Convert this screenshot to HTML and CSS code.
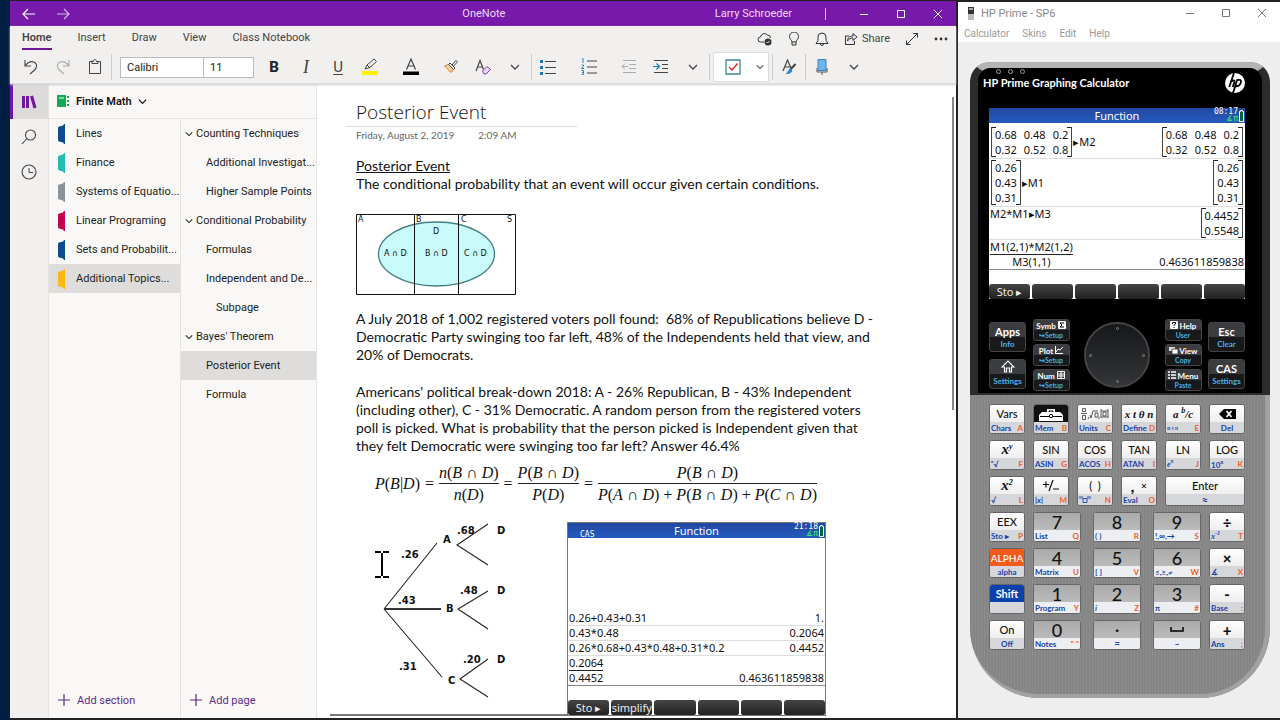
FILE: index.html
```html
<!DOCTYPE html>
<html lang="en">
<head>
<meta charset="utf-8">
<title>OneNote and HP Prime</title>
<link rel="stylesheet" href="styles.css">
</head>
<body>
<svg class="defs" aria-hidden="true">
  <symbol id="chev" viewBox="0 0 10 10"><path d="M1 3l4 4 4-4" fill="none" stroke="currentColor" stroke-width="1.3"/></symbol>
  <symbol id="tab" viewBox="0 0 8 20"><path d="M0 3.500L1 2.500 5 1.500 6 0h1v20H6l-1-1.500-4-1-1-1z" fill="currentColor"/></symbol>
  <symbol id="min" viewBox="0 0 10 10"><path d="M1 5.500h8" stroke="currentColor"/></symbol>
  <symbol id="max" viewBox="0 0 10 10"><path d="M1.500 1.500h7v7h-7z" fill="none" stroke="currentColor"/></symbol>
  <symbol id="close" viewBox="0 0 10 10"><path d="M1 1l8 8M9 1l-8 8" stroke="currentColor"/></symbol>
  <symbol id="plus" viewBox="0 0 14 14"><path d="M7 1v12M1 7h12" stroke="currentColor" stroke-width="1.200"/></symbol>
  <symbol id="batt" viewBox="0 0 5 12"><path d="M.5 1.500h1v-1h2v1h1v10h-4z" fill="#063" stroke="#fff"/></symbol>
</svg>
<div class="desktop">
  <section class="onenote">
    <header class="titlebar">
      <button aria-label="Back"><svg width="14" height="12" viewBox="0 0 14 12"><path d="M13 6H1M6 1L1 6l5 5" fill="none" stroke="currentColor" stroke-width="1.200"/></svg></button>
      <button class="forward" aria-label="Forward"><svg width="14" height="12" viewBox="0 0 14 12"><path d="M1 6h12M8 1l5 5-5 5" fill="none" stroke="currentColor" stroke-width="1.200"/></svg></button>
      <span class="app-name">OneNote</span>
      <span class="user">Larry Schroeder</span>
      <span class="tsep"></span>
      <button aria-label="Minimize"><svg width="10" height="10"><use href="#min"/></svg></button>
      <button aria-label="Maximize"><svg width="10" height="10"><use href="#max"/></svg></button>
      <button aria-label="Close"><svg width="10" height="10"><use href="#close"/></svg></button>
    </header>
    <div class="ribbon">
      <nav class="tabs">
        <a class="on" href="#home">Home</a><a href="#insert">Insert</a><a href="#draw">Draw</a><a href="#view">View</a><a href="#class">Class Notebook</a>
        <div class="tools-right">
          <button aria-label="Sync"><svg width="16" height="14" viewBox="0 0 16 14"><path d="M7 10H3.500a2.500 2.500 0 010-5 4 4 0 017-2 3 3 0 013 3" fill="none" stroke="#333"/><circle cx="11" cy="10" r="3.500" fill="#333"/><path d="M9.500 10l1 1 2-2" fill="none" stroke="#fff"/></svg></button>
          <button aria-label="Ideas"><svg width="12" height="14" viewBox="0 0 12 14"><path d="M4 10c0-2-2.500-2.500-2.500-5.500a4.500 4.500 0 019 0c0 3-2.500 3.500-2.500 5.500zv3h4v-3" fill="none" stroke="#333"/></svg></button>
          <button aria-label="Notifications"><svg width="14" height="14" viewBox="0 0 14 14"><path d="M1 11.500h12l-2-3V5a4 4 0 00-8 0v3.500zM5.500 12a1.500 1.500 0 003 0" fill="none" stroke="#333"/></svg></button>
          <button class="share"><svg width="14" height="14" viewBox="0 0 14 14"><path d="M5 4H1.500v8.500h9V9M3.500 9c0-4 3-5 5.500-5V1.500L13 5 9 8.500V6C7 6 5 6.500 3.500 9z" fill="none" stroke="#333"/></svg>Share</button>
          <button aria-label="Full screen"><svg width="14" height="14" viewBox="0 0 14 14"><path d="M1.500 12.500l11-11M8.500 1.500h4v4M1.500 8.500v4h4" fill="none" stroke="#333"/></svg></button>
          <button aria-label="More"><svg width="14" height="4" viewBox="0 0 14 4"><g fill="#333"><circle cx="2" cy="2" r="1.400"/><circle cx="7" cy="2" r="1.400"/><circle cx="12" cy="2" r="1.400"/></g></svg></button>
        </div>
      </nav>
      <div class="toolbar">
        <button aria-label="Undo"><svg width="16" height="16" viewBox="0 0 16 16"><path d="M2 1v6h6M2 7c3-4 6-5 9-4 4 2 3 6 0 8.500L7 15" fill="none" stroke="#444" stroke-width="1.100"/></svg></button>
        <button aria-label="Redo"><svg width="16" height="16" viewBox="0 0 16 16"><path d="M14 1v6H8M14 7c-3-4-6-5-9-4-4 2-3 6 0 8.500L9 15" fill="none" stroke="#aaa" stroke-width="1.100"/></svg></button>
        <button aria-label="Paste"><svg width="14" height="16" viewBox="0 0 14 16"><path d="M4 2.500H1.500v12h11v-12H10M4 1.500v3h6v-2H8.500c0-2.500-3-2.500-3 0H4" fill="none" stroke="#444"/></svg></button>
        <span class="sep"></span>
        <div class="combo"><input class="face" aria-label="Font" value="Calibri"><input class="size" aria-label="Font size" value="11"></div>
        <button class="b">B</button>
        <button class="i">I</button>
        <button class="u">U</button>
        <button aria-label="Highlight"><svg width="18" height="18" viewBox="0 0 18 18"><path d="M1 13h16v4H1z" fill="#fff200"/><path d="M4 11l2-4 7-6 2.500 2.500-6.500 6L4 11zM6 7l3 3" fill="none" stroke="#444"/></svg></button>
        <button class="wide" aria-label="Font color"><svg width="18" height="18" viewBox="0 0 18 18"><path d="M1 13.500h16V17H1z" fill="#000"/><path d="M4.500 11.500L9 1l4.500 10.500M6 8h6" fill="none" stroke="#444" stroke-width="1.200"/></svg></button>
        <button aria-label="Format painter"><svg width="16" height="16" viewBox="0 0 16 16"><path d="M1.500 7L8 13.500l2.500-3-5-5z" fill="#fbd3a0" stroke="#e07a20"/><path d="M5.500 5.500L7 4l5 5-1.500 1.500zM9 6l4-4.500 1.500 1.500L10.500 7" fill="#f2f0ef" stroke="#444"/></svg></button>
        <button aria-label="Clear formatting"><svg width="18" height="16" viewBox="0 0 18 16"><path d="M2 12L6 1.500l3.500 9M3.500 8H8" fill="none" stroke="#444" stroke-width="1.200"/><path d="M8.500 12l4.500-4.500 3.500 3L12 15H10z" fill="#ecd9f2" stroke="#8e35a8"/></svg></button>
        <button aria-label="More font options"><svg width="10" height="10"><use href="#chev"/></svg></button>
        <span class="sep"></span>
        <button aria-label="Bullets"><svg width="16" height="16" viewBox="0 0 16 16"><path d="M5 2.500h11M5 8.500h11M5 14.500h11" stroke="#444"/><path d="M0 1h3v3H0zM0 7h3v3H0zM0 13h3v3H0z" fill="#1878c0"/></svg></button>
        <button class="wide" aria-label="Numbering"><svg width="16" height="18" viewBox="0 0 16 18"><path d="M6 3h10M6 9h10M6 15h10" stroke="#444"/><path d="M1 1.500l1-1V5M.5 7h2v1.500l-2 2h2.500M.5 12.500h2v4h-2M1 14.500h1.500" fill="none" stroke="#1878c0" stroke-width=".9"/></svg></button>
        <button aria-label="Outdent"><svg width="16" height="14" viewBox="0 0 16 14"><path d="M2 .5h13M8 4.500h7M8 8.500h7M2 12.500h13M7 6.500H1M4 3.500l-3 3 3 3" fill="none" stroke="#aaa"/></svg></button>
        <button aria-label="Indent"><svg width="16" height="14" viewBox="0 0 16 14"><path d="M1 .5h14M9 4.500h6M9 8.500h6M1 12.500h14" stroke="#444"/><path d="M0 6.500h6M3.500 3.500l3 3-3 3" fill="none" stroke="#1878c0" stroke-width="1.200"/></svg></button>
        <button aria-label="More paragraph options"><svg width="10" height="10"><use href="#chev"/></svg></button>
        <span class="sep"></span>
        <div class="tagbox">
          <button aria-label="To do tag"><svg width="16" height="16" viewBox="0 0 16 16"><path d="M1 1h14v14H1z" fill="#fff" stroke="#3d8795" stroke-width="1.300"/><path d="M4 8l3 3 5.500-6.500" fill="none" stroke="#d22" stroke-width="1.300"/></svg></button>
          <button class="slim" aria-label="More tags"><svg width="8" height="10"><use href="#chev"/></svg></button>
        </div>
        <span class="sep"></span>
        <button aria-label="Styles"><svg width="16" height="16" viewBox="0 0 16 16"><path d="M2 12L6.500 1l4 9M3.500 8H9" fill="none" stroke="#444" stroke-width="1.200"/><path d="M14.500 5L9 11" stroke="#444" stroke-width="2"/><path d="M9.500 9.500l2 2c-1 3-4 3.500-7 3.500 2-1 2-4 5-5.500z" fill="#2a8ad4"/></svg></button>
        <span class="sep"></span>
        <button aria-label="Dictate"><svg width="14" height="18" viewBox="0 0 14 18"><path d="M2 10v4h10v-4M7 14v3" fill="none" stroke="#555"/><path d="M3 1.500h8v11H3z" fill="#6db5ea" stroke="#3b83bb"/></svg></button>
        <button aria-label="More"><svg width="10" height="10"><use href="#chev"/></svg></button>
      </div>
    </div>
    <div class="workspace">
      <nav class="rail">
        <button class="on" aria-label="Notebooks"><svg width="16" height="14" viewBox="0 0 16 14"><path d="M1 1h3v12H1zM5 1h3v12H5zM9 1.500l3-1 3.500 12-3 1z" fill="#6f18a0"/></svg></button>
        <button aria-label="Search"><svg width="16" height="16" viewBox="0 0 16 16"><circle cx="9.500" cy="6" r="5" fill="none" stroke="#444" stroke-width="1.100"/><path d="M6 9.500L1 15" stroke="#444" stroke-width="1.100"/></svg></button>
        <button aria-label="Recent"><svg width="16" height="16" viewBox="0 0 16 16"><circle cx="8" cy="8" r="7" fill="none" stroke="#444" stroke-width="1.100"/><path d="M8 4v4.500h4" fill="none" stroke="#444"/></svg></button>
      </nav>
      <aside class="nav">
        <button class="notebook"><svg width="14" height="14" viewBox="0 0 14 14"><path d="M1 1h9v12H1zM11 2h2v2h-2zM11 6h2v2h-2zM11 10h2v2h-2z" fill="#12ab51"/><path d="M3 4h5" stroke="#fff"/></svg><b>Finite Math</b><svg width="9" height="9"><use href="#chev"/></svg></button>
        <div class="columns">
          <div class="col sections">
            <a href="#s1"><svg class="navy"><use href="#tab"/></svg><span>Lines</span></a>
            <a href="#s2"><svg class="teal"><use href="#tab"/></svg><span>Finance</span></a>
            <a href="#s3"><svg class="gray"><use href="#tab"/></svg><span>Systems of Equatio...</span></a>
            <a href="#s4"><svg class="red"><use href="#tab"/></svg><span>Linear Programing</span></a>
            <a href="#s5"><svg class="navy"><use href="#tab"/></svg><span>Sets and Probabilit...</span></a>
            <a href="#s6" class="on"><svg class="gold"><use href="#tab"/></svg><span>Additional Topics...</span></a>
            <button class="add"><svg width="14" height="14"><use href="#plus"/></svg>Add section</button>
          </div>
          <div class="col pages">
            <a href="#p1"><svg width="8" height="8"><use href="#chev"/></svg>Counting Techniques</a>
            <a href="#p2" class="l1">Additional Investigat...</a>
            <a href="#p3" class="l1">Higher Sample Points</a>
            <a href="#p4"><svg width="8" height="8"><use href="#chev"/></svg>Conditional Probability</a>
            <a href="#p5" class="l1">Formulas</a>
            <a href="#p6" class="l1">Independent and De...</a>
            <a href="#p7" class="l2">Subpage</a>
            <a href="#p8"><svg width="8" height="8"><use href="#chev"/></svg>Bayes' Theorem</a>
            <a href="#p9" class="l1 on">Posterior Event</a>
            <a href="#p10" class="l1">Formula</a>
            <button class="add"><svg width="14" height="14"><use href="#plus"/></svg>Add page</button>
          </div>
        </div>
      </aside>
      <main class="note">
        <h1>Posterior Event</h1>
        <div class="date"><span>Friday, August 2, 2019</span><span>2:09 AM</span></div>
        <p class="intro"><u>Posterior Event</u><br>The conditional probability that an event will occur given certain conditions.</p>
        <svg class="venn" width="160" height="81" viewBox="0 0 160 81">
          <ellipse cx="80.500" cy="40" rx="58" ry="32" fill="#c9fbfb" stroke="#467f80" stroke-width="1.300"/>
          <path d="M.5.5h159v80H.5zM58.500 0v81M102.500 0v81" fill="none" stroke="#111"/>
          <g font-size="8" fill="#111"><text x="2" y="8">A</text><text x="60" y="8">B</text><text x="105" y="8">C</text><text x="151" y="8">S</text><text x="77" y="20">D</text><text x="28" y="42">A ∩ D</text><text x="69" y="42">B ∩ D</text><text x="108" y="42">C ∩ D</text></g>
        </svg>
        <p class="para">A July 2018 of 1,002 registered voters poll found:&nbsp; 68% of Republications believe D -<br>Democratic Party swinging too far left, 48% of the Independents held that view, and<br>20% of Democrats.</p>
        <p class="para">Americans' political break-down 2018: A - 26% Republican, B - 43% Independent<br>(including other), C - 31% Democratic. A random person from the registered voters<br>poll is picked. What is probability that the person picked is Independent given that<br>they felt Democratic were swinging too far left? Answer 46.4%</p>
        <div class="formula">
          <span><i>P</i>(<i>B</i>|<i>D</i>)</span><span>=</span>
          <span class="frac"><span><i>n</i>(<i>B</i> ∩ <i>D</i>)</span><span><i>n</i>(<i>D</i>)</span></span><span>=</span>
          <span class="frac"><span><i>P</i>(<i>B</i> ∩ <i>D</i>)</span><span><i>P</i>(<i>D</i>)</span></span><span>=</span>
          <span class="frac"><span><i>P</i>(<i>B</i> ∩ <i>D</i>)</span><span><i>P</i>(<i>A</i> ∩ <i>D</i>) + <i>P</i>(<i>B</i> ∩ <i>D</i>) + <i>P</i>(<i>C</i> ∩ <i>D</i>)</span></span>
        </div>
        <div class="figures">
          <svg class="tree" width="211" height="190" viewBox="0 0 211 190">
            <path d="M28 87L81 21M28 87l58 68M132 2l-31 21 31 20M132 69l-30 18 30 20M132 137l-28 20 28 18" fill="none" stroke="#222" stroke-width="1.100"/>
            <path d="M28 87h57" stroke="#333" stroke-width="2"/>
            <g font-size="10" font-weight="bold" fill="#111"><text x="87" y="21">A</text><text x="90" y="90">B</text><text x="92" y="162">C</text><text x="141" y="12">D</text><text x="141" y="72">D</text><text x="141" y="141">D</text><text x="45" y="36">.26</text><text x="42" y="82">.43</text><text x="43" y="148">.31</text><text x="101" y="12">.68</text><text x="104" y="72">.48</text><text x="107" y="141">.20</text></g>
            <path d="M19 30h6m2 0h6M26 31v23M19 55h6m2 0h6" stroke="#000" stroke-width="2" fill="none"/>
          </svg>
          <div class="lcd embedded">
            <div class="lcd-head"><small class="cas">CAS</small><span>Function</span><small class="time">21:18<br><em>∡π</em></small><svg width="5" height="12"><use href="#batt"/></svg></div>
            <div class="history">
              <div class="line"><span>0.26+0.43+0.31</span><span>1.</span></div>
              <div class="line"><span>0.43*0.48</span><span>0.2064</span></div>
              <div class="line"><span>0.26*0.68+0.43*0.48+0.31*0.2</span><span>0.4452</span></div>
              <div class="line"><span class="lfrac"><span>0.2064</span><span>0.4452</span></span><span>0.463611859838</span></div>
            </div>
            <div class="soft"><button>Sto ▸</button><button>simplify</button><button></button><button></button><button></button><button></button></div>
          </div>
        </div>
      </main>
    </div>
  </section>
  <section class="hp">
    <header class="hp-title"><svg width="8" height="13" viewBox="0 0 8 13"><path d="M1 0h6v13H1z" fill="#bbb"/><path d="M1 0h6v7H1z" fill="#333"/><path d="M2 1h4v2H2z" fill="#9ab"/></svg><span>HP Prime - SP6</span>
      <button aria-label="Minimize"><svg width="10" height="10"><use href="#min"/></svg></button><button aria-label="Maximize"><svg width="10" height="10"><use href="#max"/></svg></button><button aria-label="Close"><svg width="10" height="10"><use href="#close"/></svg></button></header>
    <nav class="hp-menu"><a href="#calc">Calculator</a><a href="#skins">Skins</a><a href="#edit">Edit</a><a href="#help">Help</a></nav>
    <div class="calc">
      <div class="top">
        <div class="brand"><div><div class="dots"><i></i><i></i><i></i></div><b>HP Prime Graphing Calculator</b></div>
          <svg width="20" height="20" viewBox="0 0 20 20" role="img" aria-label="hp"><circle cx="10" cy="10" r="10" fill="#fff"/><path d="M9 0L4.200 14M6.200 8.500q4-2.500 3.200.5L7.700 14M12.300 6.500L8 20M11.800 7.200q5-1.500 4 2.300t-5.500 4" fill="none" stroke="#000" stroke-width="1.800"/></svg></div>
        <div class="lcd">
          <div class="lcd-head"><span>Function</span><small class="time">08:17<br><em>∡π</em></small><svg width="5" height="12"><use href="#batt"/></svg></div>
          <div class="history">
            <div class="line"><span class="expr"><span class="mat c3"><i>0.68</i><i>0.48</i><i>0.2</i><i>0.32</i><i>0.52</i><i>0.8</i></span>▸M2</span><span class="mat c3"><i>0.68</i><i>0.48</i><i>0.2</i><i>0.32</i><i>0.52</i><i>0.8</i></span></div>
            <div class="line"><span class="expr"><span class="mat"><i>0.26</i><i>0.43</i><i>0.31</i></span>▸M1</span><span class="mat"><i>0.26</i><i>0.43</i><i>0.31</i></span></div>
            <div class="line start"><span>M2*M1▸M3</span><span class="mat"><i>0.4452</i><i>0.5548</i></span></div>
            <div class="line"><span class="lfrac"><span>M1(2,1)*M2(1,2)</span><span>M3(1,1)</span></span><span>0.463611859838</span></div>
          </div>
          <div class="soft"><button>Sto ▸</button><button></button><button></button><button></button><button></button><button></button></div>
        </div>
        <div class="pad">
          <div class="stack big"><button class="dk"><span>Apps</span><small>Info</small></button><button class="dk"><span><svg width="14" height="13" viewBox="0 0 14 13"><path d="M1 7l6-6 6 6h-2.500v5h-2V8h-3v4h-2V7z" fill="none" stroke="#fff" stroke-width="1.200"/></svg></span><small>Settings</small></button></div>
          <div class="stack"><button class="dk"><span>Symb <svg width="8" height="8" viewBox="0 0 8 8"><rect width="8" height="8" rx="1" fill="#fff"/><path d="M6 2H2l2 2-2 2h4" fill="none" stroke="#000"/></svg></span><small>↪Setup</small></button><button class="dk"><span>Plot <svg width="8" height="8" viewBox="0 0 8 8"><path d="M.5 0v7.500H8M1 6l2-3 2 1 3-3" fill="none" stroke="#fff"/></svg></span><small>↪Setup</small></button><button class="dk"><span>Num <svg width="8" height="8" viewBox="0 0 8 8"><path d="M.5.5h7v7h-7zM.5 3h7M.5 5h7M4 0v8" fill="none" stroke="#fff"/></svg></span><small>↪Setup</small></button></div>
          <div class="wheel" role="img" aria-label="Cursor pad"><i></i><div><i></i><i></i></div><i></i></div>
          <div class="stack"><button class="dk"><span><svg width="8" height="8" viewBox="0 0 8 8"><rect width="8" height="8" rx="1" fill="#fff"/><path d="M2.500 3V1.500h3V3L4 4v1M4 6v1" fill="none" stroke="#000"/></svg> Help</span><small>User</small></button><button class="dk"><span><svg width="9" height="8" viewBox="0 0 9 8"><path d="M0 1h6v4H0z" fill="#ddd"/><path d="M3 3h6v5H3z" fill="#fff" stroke="#222" stroke-width=".7"/></svg> View</span><small>Copy</small></button><button class="dk"><span><svg width="8" height="8" viewBox="0 0 8 8"><path d="M0 1h2m1 0h5M0 4h2m1 0h5M0 7h2m1 0h5" stroke="#fff" stroke-width="1.300"/></svg> Menu</span><small>Paste</small></button></div>
          <div class="stack big"><button class="dk"><span>Esc</span><small>Clear</small></button><button class="dk"><span>CAS</span><small>Settings</small></button></div>
        </div>
      </div>
      <div class="keys">
        <div class="row">
          <button class="k"><span>Vars</span><small>Chars <em>A</em></small></button>
          <button class="k"><span class="tool"><svg width="26" height="14" viewBox="0 0 26 14"><path d="M1 14V8l3-3h5V2h8v3h5l3 3v6z" fill="#fff"/><path d="M2 9.500h9m4 0h9M11 5V4h4v1" fill="none" stroke="#000"/><circle cx="13" cy="9" r="1.700" fill="none" stroke="#000"/></svg></span><small>Mem <em>B</em></small></button>
          <button class="k"><span><svg width="28" height="12" viewBox="0 0 28 12"><path d="M1.500.5h3v3h-3zM0 5.500h6M1.500 7.500h3v4h-3zM8 9l-1 2M9 7l1 3 2-7h5M14 5h3v4h-3zM18.500 9l-1 2M20 1v9M27 1v9M22 4h3v4h-3zM20 3h7M20 9h7" fill="none" stroke="#333" stroke-width=".8"/></svg></span><small>Units <em>C</em></small></button>
          <button class="k"><span class="ser">x t θ n</span><small>Define <em>D</em></small></button>
          <button class="k"><span class="ser">a&nbsp;<sup>b</sup>/c</span><small><span class="tiny">o ı ıı</span> <em>E</em></small></button>
          <button class="k"><span><svg width="17" height="10" viewBox="0 0 17 10"><path d="M0 5l5-5h12v10H5z"/><path d="M7.500 2l5 6m0-6l-5 6" stroke="#fff" stroke-width="1.700"/></svg></span><small>Del</small></button>
        </div>
        <div class="row">
          <button class="k"><span class="ser lg">x<sup>y</sup></span><small>ⁿ√ <em>F</em></small></button>
          <button class="k"><span>SIN</span><small>ASIN <em>G</em></small></button>
          <button class="k"><span>COS</span><small>ACOS <em>H</em></small></button>
          <button class="k"><span>TAN</span><small>ATAN <em>I</em></small></button>
          <button class="k"><span>LN</span><small><span class="serif">e<sup>x</sup></span> <em>J</em></small></button>
          <button class="k"><span>LOG</span><small><span>10<sup>x</sup></span> <em>K</em></small></button>
        </div>
        <div class="row">
          <button class="k"><span class="ser lg">x<sup>2</sup></span><small>√ <em>L</em></small></button>
          <button class="k"><span class="pm"><svg width="16" height="12" viewBox="0 0 16 12"><path d="M0 4.500h6M3 1.500v6M10 0L6 11M10 9h6" fill="none" stroke="#111" stroke-width="1.200"/></svg></span><small><span>|<i>x</i>|</span> <em>M</em></small></button>
          <button class="k"><span>(&nbsp; )</span><small><svg width="12" height="7" viewBox="0 0 12 7"><path d="M1 0v3M3 0v3M4 2.500h4v4H4zM9 0v3M11 0v3" fill="none" stroke="#1743a8" stroke-width=".9"/></svg> <em>N</em></small></button>
          <button class="k"><span class="comma">, <small>⨯</small></span><small>Eval <em>O</em></small></button>
          <button class="k enter"><span>Enter</span><small>≈</small></button>
        </div>
        <div class="row">
          <button class="k"><span>EEX</span><small>Sto ▸ <em>P</em></small></button>
          <div class="nums"><button class="k n"><span>7</span><small>List <em>Q</em></small></button><button class="k n"><span>8</span><small>( ) <em>R</em></small></button><button class="k n"><span>9</span><small>!,∞,→ <em>S</em></small></button></div>
          <button class="k op"><span>÷</span><small><span class="serif">x<sup>-1</sup></span> <em>T</em></small></button>
        </div>
        <div class="row">
          <button class="k alpha"><span>ALPHA</span><small>alpha</small></button>
          <div class="nums"><button class="k n"><span>4</span><small>Matrix <em>U</em></small></button><button class="k n"><span>5</span><small>[ ] <em>V</em></small></button><button class="k n"><span>6</span><small>≤,≥,≠ <em>W</em></small></button></div>
          <button class="k op"><span>×</span><small>∡ <em>X</em></small></button>
        </div>
        <div class="row">
          <button class="k shift"><span>Shift</span><small></small></button>
          <div class="nums"><button class="k n"><span>1</span><small>Program <em>Y</em></small></button><button class="k n"><span>2</span><small><i>i</i> <em>Z</em></small></button><button class="k n"><span>3</span><small>π <em>#</em></small></button></div>
          <button class="k op"><span>-</span><small>Base <em>:</em></small></button>
        </div>
        <div class="row">
          <button class="k"><span>On</span><small>Off</small></button>
          <div class="nums"><button class="k n"><span>0</span><small>Notes <em>" "</em></small></button><button class="k n"><span class="dot">·</span><small class="sym">=</small></button><button class="k n"><span><svg width="14" height="5" viewBox="0 0 14 5"><path d="M1 0v4h12V0" fill="none" stroke="#000" stroke-width="1.500"/></svg></span><small class="sym">–</small></button></div>
          <button class="k op"><span>+</span><small>Ans <em>;</em></small></button>
        </div>
      </div>
    </div>
  </section>
</div>
</body>
</html>
```
FILE: styles.css
```css
* { box-sizing: border-box; }
body { margin: 0; background: #0a1a38; font-family: Roboto, "Open Sans", sans-serif; font-size: 11px; color: #222; }
.defs { position: absolute; width: 0; height: 0; }
button { font: inherit; color: inherit; background: none; border: 0; padding: 0; display: flex; align-items: center; justify-content: center; white-space: nowrap; }
a { color: inherit; text-decoration: none; }
svg { flex: none; }

.desktop { display: flex; min-height: 100vh; padding: 1px 0 2px 10px; background: linear-gradient(90deg, #001d42 9px, #222 10px); }
.onenote { flex: 1; min-width: 0; display: flex; flex-direction: column; background: #fff; margin-right: 2px; }

.titlebar { display: flex; align-items: center; height: 25px; background: #7719aa; color: #eddcf5; padding: 0; }
.titlebar button { width: 37px; height: 25px; color: #fff; }
.titlebar .forward { width: 32px; opacity: .7; }
.app-name { flex: 1; text-align: center; padding-left: 174px; }
.user { margin-right: 33px; }
.tsep { width: 1px; height: 12px; background: #d9b8ea; margin-right: 19px; }

.ribbon { background: #f2f0ef; border-bottom: 1px solid #ddd; box-shadow: 0 1px 2px #ccc; height: 58px; position: relative; }
.tabs { display: flex; align-items: center; height: 25px; padding: 0 8px 0 12px; gap: 26px; color: #444; }
.tabs a { line-height: 21px; border-bottom: 2px solid transparent; white-space: nowrap; }
.tabs .on { font-weight: 600; border-color: #6b1796; }
.tools-right { display: flex; margin-left: auto; gap: 15px; align-items: center; }
.tools-right .share { gap: 4px; }
.toolbar { display: flex; align-items: center; height: 32px; padding-left: 5px; }
.toolbar button { width: 32px; height: 28px; color: #444; font-size: 15px; }
.toolbar .wide { width: 49px; }
.toolbar .b { font-weight: 800; color: #222; }
.toolbar .i { font-family: "Liberation Serif", serif; font-style: italic; font-size: 18px; }
.toolbar .u { text-decoration: underline; text-underline-offset: 2px; }
.sep { width: 1px; height: 26px; background: #ccc; }
.combo { display: flex; margin: 0 4px 0 8px; }
.combo input { height: 21px; border: 1px solid #bbb; background: #fff; font: inherit; color: #222; padding: 0 6px; border-radius: 0; }
.face { width: 84px; }
.combo .size { width: 50px; border-left: 0; }
.tagbox { display: flex; align-items: center; height: 30px; background: #fff; border: 1px solid #ddd; margin: 0 3px; }
.tagbox button { width: 37px; }
.tagbox .slim { width: 17px; }

.workspace { flex: 1; display: flex; min-height: 0; }
.rail { width: 39px; background: #f2f0ef; border-right: 1px solid #e4e2e1; }
.rail button { width: 38px; height: 35px; border-left: 3px solid transparent; padding-right: 3px; }
.rail .on { background: #dddbda; border-color: #6f18a0; }
.nav { width: 268px; background: #f9f8f7; display: flex; flex-direction: column; border-right: 1px solid #e6e4e3; }
.notebook { height: 35px; padding-left: 7px; gap: 6px; justify-content: flex-start; border-bottom: 1px solid #e6e4e3; color: #111; }
.notebook b { font-weight: 600; }
.columns { flex: 1; display: flex; }
.col { display: flex; flex-direction: column; }
.sections { width: 132px; border-right: 1px solid #e6e4e3; }
.pages { flex: 1; min-width: 0; }
.col a { display: flex; align-items: center; height: 29px; white-space: nowrap; }
.sections a { padding-left: 9px; gap: 10px; }
.sections a svg { width: 8px; height: 20px; }
.pages a { padding-left: 4px; gap: 3px; }
.pages .l1 { padding-left: 25px; }
.pages .l2 { padding-left: 35px; }
.col .on { background: #dfdddc; }
.navy { color: #0c4c8c; } .teal { color: #20bdb0; } .gray { color: #8a939b; } .red { color: #c4044e; } .gold { color: #fdb813; }
.add { margin-top: auto; height: 36px; gap: 6px; padding-left: 8px; justify-content: flex-start; color: #5f2a86; }

.note { flex: 1; min-width: 0; padding: 16px 2px 0 39px; font-family: Lato, sans-serif; color: #111; background: linear-gradient(#888, #888) right 2px top 13px / 2px 313px no-repeat, linear-gradient(#777, #777) left 13px bottom 2px / 345px 2px no-repeat; }
.note h1 { font: 300 19px/24px "Open Sans", sans-serif; margin: 0 0 0 -10px; padding: 0 0 2px 10px; width: 231px; border-bottom: 1px solid #ddd; }
.date { display: flex; gap: 24px; font-size: 10px; line-height: 17px; color: #666; }
.note p { font-size: 14px; line-height: 18px; margin: 0; white-space: nowrap; }
.note .intro { margin: 13px 0 21px; }
.venn, .tree { display: block; font-family: "DejaVu Sans", sans-serif; }
.note .para { margin: 15px 0 19px; }
.note .para + .para { margin: 0 0 7px; }
.formula { display: flex; align-items: center; gap: 5px; font: 16px/21px "Liberation Serif", serif; margin-left: 19px; white-space: nowrap; }
.frac { display: flex; flex-direction: column; text-align: center; }
.frac > span:first-child { border-bottom: 1px solid #222; }
.figures { display: flex; align-items: flex-start; margin-top: 17px; }

.lcd { display: flex; flex-direction: column; width: 256px; background: #fff; color: #111; font-family: "Noto Sans", sans-serif; font-size: 11px; }
.embedded { width: 259px; height: 194px; border: 1px solid #777; }
.lcd-head { display: flex; align-items: center; height: 15px; background: linear-gradient(#2148a0, #245bc0); color: #fff; position: relative; justify-content: center; }
.lcd-head small { position: absolute; font: 8px/7px "DejaVu Sans Mono", monospace; }
.lcd-head .cas { left: 12px; bottom: 0; }
.lcd-head .time { right: 7px; top: 0; text-align: right; }
.lcd-head em { color: #4e6; font-style: normal; }
.lcd-head svg { position: absolute; right: 1px; top: 2px; }
.history { flex: 1; display: flex; flex-direction: column; justify-content: flex-end; border-bottom: 1px solid #888; }
.line { display: flex; justify-content: space-between; align-items: center; line-height: 14px; padding: 0 1px; border-bottom: 1px solid #ddd; }
.line:last-child { border: 0; align-items: flex-end; }
.line.start { align-items: flex-start; }
.expr { display: flex; align-items: center; }
.lfrac { display: flex; flex-direction: column; text-align: center; }
.lfrac span:first-child { border-bottom: 1px solid #222; }
.mat { display: grid; line-height: 15px; padding: 0 3px; margin: 1px; background: linear-gradient(#222, #222) 0 0 / 4px 1px no-repeat, linear-gradient(#222, #222) 0 100% / 4px 1px no-repeat, linear-gradient(#222, #222) 100% 0 / 4px 1px no-repeat, linear-gradient(#222, #222) 100% 100% / 4px 1px no-repeat; border: solid #444; border-width: 0 1px; }
.c3 { grid-template-columns: auto auto auto; column-gap: 7px; }
.mat i { font-style: normal; }
.soft { display: grid; grid-template-columns: repeat(6, 1fr); gap: 2px; margin-top: 14px; }
.soft button { height: 15px; background: linear-gradient(#444, #222); color: #eee; border-radius: 3px 3px 2px 2px; min-width: 0; }

.hp { width: 322px; flex: none; background: #eee; margin-top: 1px; }
.hp-title { display: flex; align-items: center; height: 22px; background: #fff; color: #888; padding: 0 3px 0 9px; gap: 6px; }
.hp-title span { margin-right: auto; }
.hp-title button { width: 30px; color: #777; }
.hp-menu { display: flex; gap: 13px; height: 18px; align-items: center; background: #fff; color: #999; padding-left: 6px; font-size: 10px; }
.calc { margin: 20px 10px 20px 12px; border-radius: 20px 20px 70px 70px; overflow: hidden; background: #8a8a8a; }
.top { background: #000; border: solid #2c2c2c; border-width: 6px 8px 2px; border-top-color: #b4b4b4; padding: 0 17px 2px 11px; border-radius: 20px 20px 0 0; }
.brand { display: flex; justify-content: space-between; align-items: flex-start; height: 40px; margin: 0 0 0 -6px; color: #fff; font-family: Lato, sans-serif; line-height: 14px; }
.brand svg { margin-top: 5px; }
.dots { display: flex; gap: 7px; padding: 1px 13px 2px; }
.dots i { width: 5px; height: 5px; border: 1px solid #999; border-radius: 50%; }
.top .lcd { height: 191px; width: 100%; }
.pad { display: flex; justify-content: space-between; align-items: center; margin-top: 20px; height: 72px; font-family: Lato, sans-serif; }
.stack { display: grid; gap: 3px; width: 37px; }
.big { gap: 7px; }
.dk { flex-direction: column; height: 22px; border: 1px solid #444; border-radius: 3px; background: linear-gradient(#3a3c40 50%, #17191b 50%); color: #fff; font-size: 8px; font-weight: bold; line-height: 10px; }
.dk small { color: #45b0e5; font-size: 7px; line-height: 9px; }
.big .dk { height: 30px; font-size: 11px; line-height: 15px; }
.big small { font-size: 8px; line-height: 11px; }
.wheel { width: 66px; height: 66px; border-radius: 50%; border: 2px solid #444; background: linear-gradient(#17181a, #333538); display: flex; flex-direction: column; align-items: center; justify-content: space-between; padding: 3px; margin: 0 8px; }
.wheel div { align-self: stretch; display: flex; justify-content: space-between; }
.wheel i { width: 3px; height: 3px; border: 1px solid #888; border-radius: 50%; }

.keys { padding: 9px 31px 44px 19px; border: solid #a2a2a2; border-width: 0 5px 4px 0; border-radius: 0 0 70px 70px; background: repeating-linear-gradient(90deg, #858585 0 2px, #8c8c8c 2px 3px); font-family: Lato, sans-serif; display: grid; gap: 6px; }
.row { display: flex; justify-content: space-between; gap: 8px; }
.k { width: 36px; height: 30px; flex: none; flex-direction: column; align-items: stretch; justify-content: flex-start; border: 1px solid #666; border-radius: 3px; background: #ddd; color: #111; overflow: hidden; font-size: 11px; }
.k > span { height: 17px; display: flex; align-items: center; justify-content: center; background: linear-gradient(#fff, #eee); font-weight: 500; }
.k > small { height: 11px; display: flex; align-items: center; justify-content: center; font-size: 8px; font-weight: bold; color: #1743a8; padding: 0 1px; background: #d5d7db; }
.k > small:has(em) { justify-content: space-between; }
.k em { color: #f06024; font-style: normal; }
.k sup { font-size: 8px; line-height: 7px; vertical-align: baseline; align-self: flex-start; padding-top: 2px; }
.k small sup { font-size: 6px; vertical-align: super; padding: 0; }
.k .sym { font-size: 9px; line-height: 9px; }
.k .ser, .serif { font-family: "Liberation Serif", serif; font-style: italic; font-weight: bold; }
.k .lg { font-size: 15px; }
.k .tool { background: #111; }
.tiny { font-size: 6px; }
.k .comma { font-weight: 900; font-size: 15px; gap: 7px; }
.comma small { font-size: 7px; }
.row .enter { width: 80px; }
.enter > small { font-size: 11px; }
.nums { flex: 1; display: flex; justify-content: space-between; }
.n { width: 48px; }
.n > span { font-size: 18px; line-height: 16px; background: linear-gradient(#aaa, #bbb); }
.k .dot { font-size: 13px; font-weight: 900; }
.n > small { background: #eceef1; }
.k.op > span { font-size: 15px; font-weight: 900; }
.k.alpha > span { background: #f4591c; color: #fff; font-size: 10px; }
.k.shift > span { background: #0b41ad; color: #fff; font-weight: bold; }
```
